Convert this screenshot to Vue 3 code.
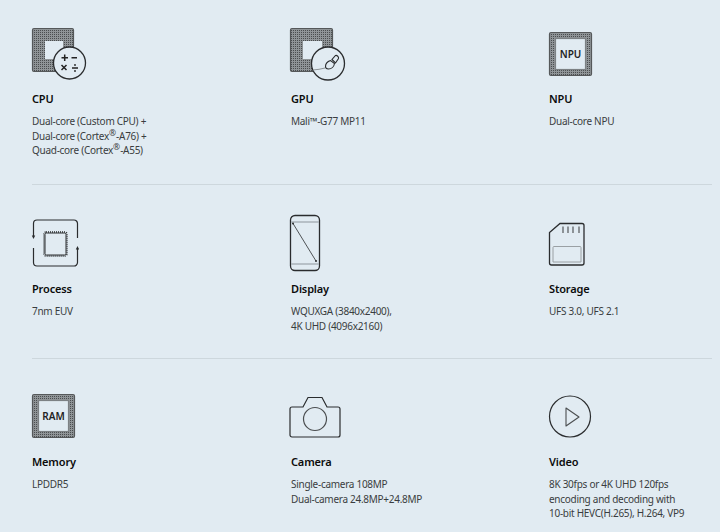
<script setup>
const rows = [
  { cls: 'r1', items: [
    { k: 'cpu', t: 'CPU', d: ['Dual-core (Custom CPU) +', 'Dual-core (Cortex®-A76) +', 'Quad-core (Cortex®-A55)'] },
    { k: 'gpu', t: 'GPU', d: ['Mali™-G77 MP11'] },
    { k: 'npu', t: 'NPU', d: ['Dual-core NPU'] },
  ] },
  { cls: 'r2', items: [
    { k: 'process', t: 'Process', d: ['7nm EUV'] },
    { k: 'display', t: 'Display', d: ['WQUXGA (3840x2400),', '4K UHD (4096x2160)'] },
    { k: 'storage', t: 'Storage', d: ['UFS 3.0, UFS 2.1'] },
  ] },
  { cls: 'r3', items: [
    { k: 'ram', t: 'Memory', d: ['LPDDR5'] },
    { k: 'camera', t: 'Camera', d: ['Single-camera 108MP', 'Dual-camera 24.8MP+24.8MP'] },
    { k: 'video', t: 'Video', d: ['8K 30fps or 4K UHD 120fps', 'encoding and decoding with', '10-bit HEVC(H.265), H.264, VP9'] },
  ] },
]
</script>

<template>
  <div class="page">
    <svg class="defs" width="0" height="0" aria-hidden="true">
      <defs>
        <pattern id="dots" width="2" height="2" patternUnits="userSpaceOnUse">
          <rect width="2" height="2" fill="#8f9497" />
          <rect width="1" height="1" fill="#4a4d4f" />
        </pattern>
      </defs>
    </svg>
    <section v-for="row in rows" :key="row.cls" class="row" :class="row.cls">
      <article v-for="it in row.items" :key="it.k" class="item">
        <svg class="icon" width="60" height="56" viewBox="0 0 60 56" fill="none" stroke="#2a2c2e" stroke-width="1.2">
          <template v-if="it.k === 'cpu'">
            <rect x="0.5" y="4.5" width="41" height="43" rx="1.5" fill="url(#dots)" stroke="#55585a" />
            <rect x="13" y="17" width="18" height="18" fill="#e1ebf2" stroke="none" />
            <circle cx="37.500" cy="39" r="16" fill="#e1ebf2" stroke-width="1.3" />
            <path d="M29.500 33.700h6.500M32.700 30.500v6.500M39.500 33.700h5.500M29.500 41l5 5M34.500 41l-5 5M40 44h6" stroke="#222" stroke-width="1.500" />
            <circle cx="43" cy="41" r=".9" fill="#222" stroke="none" />
            <circle cx="43" cy="47" r=".9" fill="#222" stroke="none" />
          </template>
          <template v-else-if="it.k === 'gpu'">
            <rect x="-0.500" y="4.500" width="42" height="43" rx="1.500" fill="url(#dots)" stroke="#55585a" />
            <rect x="12" y="17" width="19" height="18" fill="#e1ebf2" stroke="none" />
            <circle cx="37" cy="39.500" r="16.500" fill="#e1ebf2" stroke-width="1.300" />
            <path d="M22 46c4-.3 8-.9 12-2" stroke="#8d9396" stroke-width="1" />
            <path d="M39.500 36.500c-3 1-5 3.500-5 6 0 1.500 1 2.500 3 2.500 3 0 5.500-2.500 6-5.500z" stroke-width="1.100" />
            <path d="M41 35.500l3.500 3.500 3-4.500c.5-1.500-1.500-3.500-3-3z" stroke-width="1.100" />
          </template>
          <template v-else-if="it.k === 'npu' || it.k === 'ram'">
            <g :transform="it.k === 'npu' ? 'translate(0,8)' : 'translate(0,7)'">
              <rect x="0.500" y="0.500" width="42" height="43" rx="1.500" fill="url(#dots)" stroke="#55585a" />
              <rect x="6.500" y="6.500" width="30" height="31" fill="#e1ebf2" stroke="#7c8184" />
            </g>
          </template>
          <template v-else-if="it.k === 'process'">
            <path d="M1.500 22V9.500a3.500 3.500 0 0 1 3.500-3.500h37a3.500 3.500 0 0 1 3.500 3.500V24M45.500 34v14.500a3.500 3.500 0 0 1-3.500 3.500H5a3.500 3.500 0 0 1-3.500-3.500V34" />
            <path d="M-.2 21.500h3.400L1.500 25zM43.800 35.500h3.400L45.500 32z" fill="#2a2c2e" stroke="none" />
            <rect x="13" y="19" width="21" height="22" rx="1.500" stroke-width="1" />
            <rect x="12" y="18" width="23" height="24" rx="2" stroke-width="1.400" stroke-dasharray="1 1" />
          </template>
          <template v-else-if="it.k === 'display'">
            <rect x="-0.500" y="1.500" width="29" height="55" rx="4.500" stroke-width="1.300" />
            <path d="M0 8h28M0 50h28" stroke="#a9b3b9" stroke-width="1.300" />
            <path d="M2 9.500 25 47" stroke="#4f5356" stroke-width="1" />
            <circle cx="2" cy="9.500" r="1" fill="#2a2c2e" stroke="none" />
            <circle cx="25" cy="47" r="1" fill="#2a2c2e" stroke="none" />
          </template>
          <template v-else-if="it.k === 'storage'">
            <path d="M11 9.500h22a2 2 0 0 1 2 2v37.500a2 2 0 0 1-2 2H2.500a2 2 0 0 1-2-2V18.500z" stroke-width="1.300" />
            <path d="M14 12.500v6.500M19 12.500v6.500M24 12.500v6.500M30 12.500v6.500" stroke="#55585a" stroke-width="1.200" />
            <path d="M4 33.500a1 1 0 0 1 1-1h26a1 1 0 0 1 1 1v14.500H4z" stroke="#9aa0a4" stroke-width="1" />
          </template>
          <template v-else-if="it.k === 'camera'">
            <path d="M-1 22a2 2 0 0 1 2-2h11l5-9.500h14l5 9.500h11a2 2 0 0 1 2 2v26a2 2 0 0 1-2 2H1a2 2 0 0 1-2-2z" stroke-width="1.200" />
            <circle cx="24" cy="32" r="11.500" stroke-width="1.200" stroke="#4b4e50" />
          </template>
          <template v-else-if="it.k === 'video'">
            <circle cx="21" cy="29.500" r="20.500" stroke-width="1.200" />
            <path d="M17 21v18l13-9z" stroke="#4b4e50" stroke-width="1.100" stroke-linejoin="round" />
          </template>
        </svg>
        <span v-if="it.k === 'npu'" class="chip-label npu">NPU</span>
        <span v-if="it.k === 'ram'" class="chip-label ram">RAM</span>
        <h3 class="title">{{ it.t }}</h3>
        <div class="desc">
          <div v-for="line in it.d" :key="line" class="line">
            <template v-for="(part, i) in line.split('®')" :key="i"><sup v-if="i">®</sup>{{ part }}</template>
          </div>
        </div>
      </article>
    </section>
  </div>
</template>

<style>
html, body { margin: 0; background: #e1ebf2; }
</style>

<style scoped>
.page {
  width: 720px;
  height: 532px;
  overflow: hidden;
  background: #e1ebf2;
  font-family: "Noto Sans", "Open Sans", sans-serif;
  color: #333;
}
.defs { position: absolute; }
.row {
  display: grid;
  grid-template-columns: 259px 258px 1fr;
  margin: 0 8px 0 32px;
  box-sizing: border-box;
}
.r1 { padding-top: 24px; height: 185px; border-bottom: 1px solid #cdd7dd; }
.r2 { padding-top: 29px; height: 174px; border-bottom: 1px solid #cdd7dd; }
.r3 { padding-top: 28px; }
.item { position: relative; }
.icon { display: block; overflow: visible; }
.chip-label {
  position: absolute;
  left: 0;
  width: 43px;
  text-align: center;
  font-size: 10px;
  font-weight: 600;
  color: #222;
  line-height: 14px;
}
.npu { top: 23px; }
.ram { top: 22px; }
.title {
  margin: 11px 0 0;
  font-size: 11px;
  line-height: 15px;
  font-weight: 600;
  letter-spacing: -0.15px;
  color: #0c0c0c;
}
.desc {
  margin-top: 8px;
  font-size: 10px;
  line-height: 14.500px;
  letter-spacing: -0.28px;
  color: #3a3d40;
}
.line { height: 14.500px; white-space: nowrap; }
sup { font-size: 8.500px; line-height: 0; vertical-align: 4px; letter-spacing: 0; }
</style>
